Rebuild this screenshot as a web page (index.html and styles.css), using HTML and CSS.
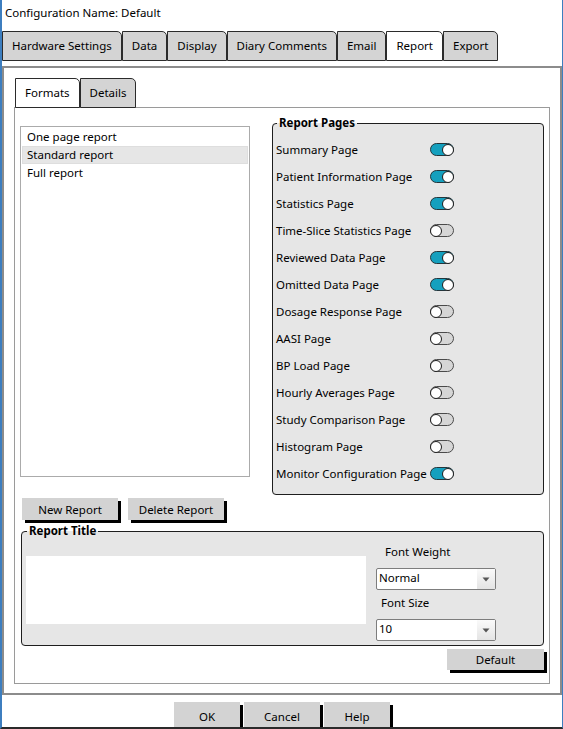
FILE: index.html
```html
<!DOCTYPE html>
<html>
<head>
<meta charset="utf-8">
<link rel="stylesheet" href="styles.css">
</head>
<body>
<div class="window">
  <div class="config">Configuration Name: Default</div>
  <div class="tabs">
    <div class="tab">Hardware Settings</div>
    <div class="tab">Data</div>
    <div class="tab">Display</div>
    <div class="tab">Diary Comments</div>
    <div class="tab">Email</div>
    <div class="tab active">Report</div>
    <div class="tab">Export</div>
  </div>
  <div class="outer">
    <div class="subtabs">
      <div class="subtab active">Formats</div>
      <div class="subtab">Details</div>
    </div>
    <div class="inner">
      <div class="top-row">
        <div class="listbox">
          <div class="item">One page report</div>
          <div class="item selected">Standard report</div>
          <div class="item">Full report</div>
        </div>
        <fieldset class="group pages">
          <legend>Report Pages</legend>
          <div class="page-grid">
            <span>Summary Page</span><span class="toggle on"><span class="knob"></span></span>
            <span>Patient Information Page</span><span class="toggle on"><span class="knob"></span></span>
            <span>Statistics Page</span><span class="toggle on"><span class="knob"></span></span>
            <span>Time-Slice Statistics Page</span><span class="toggle off"><span class="knob"></span></span>
            <span>Reviewed Data Page</span><span class="toggle on"><span class="knob"></span></span>
            <span>Omitted Data Page</span><span class="toggle on"><span class="knob"></span></span>
            <span>Dosage Response Page</span><span class="toggle off"><span class="knob"></span></span>
            <span>AASI Page</span><span class="toggle off"><span class="knob"></span></span>
            <span>BP Load Page</span><span class="toggle off"><span class="knob"></span></span>
            <span>Hourly Averages Page</span><span class="toggle off"><span class="knob"></span></span>
            <span>Study Comparison Page</span><span class="toggle off"><span class="knob"></span></span>
            <span>Histogram Page</span><span class="toggle off"><span class="knob"></span></span>
            <span>Monitor Configuration Page</span><span class="toggle on"><span class="knob"></span></span>
          </div>
        </fieldset>
      </div>
      <div class="btn-row">
        <button class="btn btn-report">New Report</button>
        <button class="btn btn-report">Delete Report</button>
      </div>
      <fieldset class="group title-group">
        <legend>Report Title</legend>
        <div class="title-body">
          <div class="title-text"></div>
          <div class="font-col">
            <div class="label label-weight">Font Weight</div>
            <div class="select"><span class="sel-val">Normal</span><span class="sel-arrow"><svg width="8" height="5" viewBox="0 0 8 5"><path d="M0.5 0.5 L7.5 0.5 L4 4.5 Z" fill="#555"/></svg></span></div>
            <div class="label label-size">Font Size</div>
            <div class="select"><span class="sel-val">10</span><span class="sel-arrow"><svg width="8" height="5" viewBox="0 0 8 5"><path d="M0.5 0.5 L7.5 0.5 L4 4.5 Z" fill="#555"/></svg></span></div>
          </div>
        </div>
      </fieldset>
      <div class="default-row">
        <button class="btn btn-default">Default</button>
      </div>
    </div>
  </div>
  <div class="footer">
    <button class="btn btn-ok">OK</button>
    <button class="btn btn-cancel">Cancel</button>
    <button class="btn btn-help">Help</button>
  </div>
</div>
</body>
</html>
```

FILE: styles.css
```css
* { box-sizing: border-box; }
html, body { margin: 0; padding: 0; background: #fff; }
body {
  font-family: "Noto Sans", "Segoe UI", sans-serif;
  font-size: 11.5px;
  color: #000;
}
.window {
  width: 563px;
  height: 729px;
  overflow: hidden;
  border-left: 2px solid #3d7ebf;
  border-right: 1px solid #3d7ebf;
  border-bottom: 2px solid #2a2a2a;
  background: #fff;
  display: flex;
  flex-direction: column;
}
.config {
  flex: none;
  height: 31px;
  padding: 4px 0 0 3px;
  line-height: 18px;
}
.tabs {
  flex: none;
  display: flex;
  height: 30px;
}
.tab {
  height: 30px;
  line-height: 28px;
  padding: 0 9px;
  background: #d4d4d4;
  border: 1px solid #2b2b2b;
  border-top-right-radius: 5px;
  white-space: nowrap;
}
.tab.active { background: #fff; }
.outer {
  flex: none;
  margin-top: 5px;
  height: 629px;
  border: 2px solid #8c8c8c;
}
.subtabs {
  display: flex;
  margin: 10px 0 -1px 11px;
  position: relative;
  z-index: 1;
}
.subtab {
  height: 30px;
  line-height: 28px;
  padding: 0 9px;
  background: #d4d4d4;
  border: 1px solid #2b2b2b;
  border-top-right-radius: 5px;
}
.subtab.active { background: #fff; }
.inner {
  margin-left: 10px;
  width: 536px;
  height: 577px;
  border: 1px solid #9a9a9a;
  display: flex;
  flex-direction: column;
}
.top-row {
  display: flex;
  align-items: flex-start;
  margin-top: 7px;
}
.listbox {
  margin: 11px 0 0 5px;
  width: 230px;
  height: 351px;
  border: 1px solid #ababab;
  padding: 1px;
  background: #fff;
}
.item {
  height: 18px;
  line-height: 18px;
  padding-left: 5px;
}
.item.selected {
  background: #e6e6e6;
  box-shadow: inset 0 0 0 1px #dedede;
}
.group {
  margin: 0;
  border: 1px solid #1e1e1e;
  border-radius: 4px;
  background: #e6e6e6;
  min-width: 0;
}
.group legend {
  font-weight: bold;
  line-height: 16px;
  padding: 0 2px;
  margin-left: 1px;
}
.pages {
  margin-left: 22px;
  width: 272px;
  padding: 5px 0 7px 3px;
}
.page-grid {
  display: grid;
  grid-template-columns: 154px 24px;
  grid-auto-rows: 27px;
  align-items: center;
  white-space: nowrap;
}
.toggle {
  display: flex;
  align-items: center;
  width: 24px;
  height: 13px;
  border-radius: 7px;
  border: 1px solid #24363c;
}
.toggle.on {
  background: #15a0be;
  justify-content: flex-end;
}
.toggle.off {
  background: #d6d6d6;
  border-color: #4a4a4a;
  justify-content: flex-start;
}
.knob {
  width: 12px;
  height: 12px;
  border-radius: 50%;
  background: #fff;
  border: 1px solid #1e1e1e;
  margin: 0 -1px;
}
.btn {
  font-family: inherit;
  font-size: 11.5px;
  color: #000;
  background: #d3d3d3;
  border: none;
  border-radius: 0;
  padding: 0;
  box-shadow: 3px 3px 0 #000;
  text-align: center;
}
.btn-row {
  display: flex;
  gap: 10px;
  margin: 3px 0 0 7px;
}
.btn-report {
  width: 96px;
  height: 22px;
}
.title-group {
  margin: 3px 0 0 6px;
  width: 523px;
  padding: 0 0 4px 4px;
}
.title-body {
  display: flex;
  align-items: flex-start;
}
.title-text {
  margin-top: 17px;
  width: 340px;
  height: 68px;
  background: #fff;
}
.font-col {
  margin-left: 10px;
  padding-top: 5px;
  display: flex;
  flex-direction: column;
  align-items: flex-start;
}
.label {
  line-height: 16px;
}
.label-weight { margin-left: 9px; }
.label-size { margin-left: 5px; margin-top: 5px; }
.select {
  margin-top: 8px;
  width: 120px;
  height: 22px;
  border: 1px solid #7d7d7d;
  border-radius: 2px;
  background: #fff;
  display: flex;
  align-items: center;
  justify-content: space-between;
  padding-left: 2px;
}
.sel-val {
  line-height: 16px;
  margin-bottom: 3px;
}
.sel-arrow {
  width: 18px;
  height: 20px;
  display: flex;
  align-items: center;
  justify-content: center;
  background: linear-gradient(#fafafa, #e4e4e4);
}
.default-row {
  display: flex;
  justify-content: flex-end;
  margin: 3px 5px 0 0;
}
.btn-default {
  width: 97px;
  height: 21px;
}
.footer {
  flex: none;
  display: flex;
  justify-content: center;
  gap: 4px;
  margin-top: 7px;
}
.footer .btn { height: 28px; }
.btn-ok { width: 66px; }
.btn-cancel { width: 76px; }
.btn-help { width: 66px; }
```
